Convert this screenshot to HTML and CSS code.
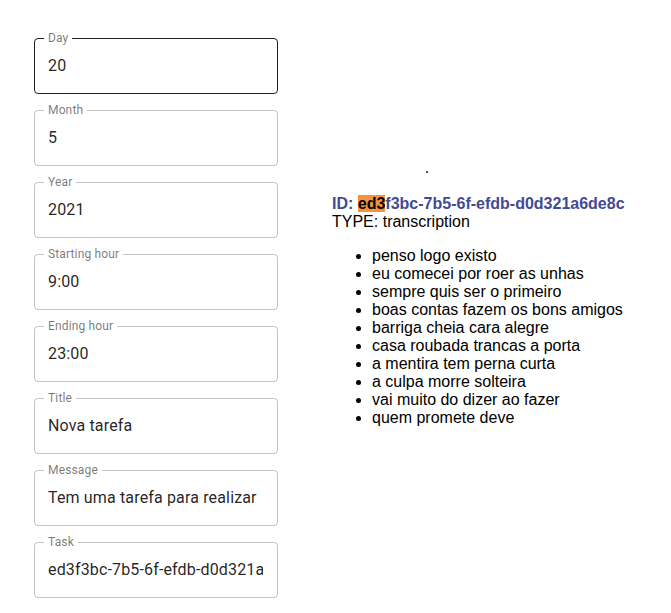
FILE: index.html
```html
<!DOCTYPE html>
<html lang="pt">
<head>
    <meta charset="UTF-8">
    <meta name="viewport" content="width=device-width, initial-scale=1.0">
    <title>Tarefa</title>
    <link rel="stylesheet" href="styles.css">
</head>
<body>
    <div class="page">
        <form class="task-form">
            <fieldset class="field active">
                <legend>Day</legend>
                <input type="text" value="20">
            </fieldset>
            <fieldset class="field">
                <legend>Month</legend>
                <input type="text" value="5">
            </fieldset>
            <fieldset class="field">
                <legend>Year</legend>
                <input type="text" value="2021">
            </fieldset>
            <fieldset class="field">
                <legend>Starting hour</legend>
                <input type="text" value="9:00">
            </fieldset>
            <fieldset class="field">
                <legend>Ending hour</legend>
                <input type="text" value="23:00">
            </fieldset>
            <fieldset class="field">
                <legend>Title</legend>
                <input type="text" value="Nova tarefa">
            </fieldset>
            <fieldset class="field">
                <legend>Message</legend>
                <input type="text" value="Tem uma tarefa para realizar">
            </fieldset>
            <fieldset class="field">
                <legend>Task</legend>
                <input type="text" value="ed3f3bc-7b5-6f-efdb-d0d321a6de8c">
            </fieldset>
        </form>

        <div class="details">
            <p class="dot">.</p>
            <p class="task-id">ID: <mark>ed3</mark>f3bc-7b5-6f-efdb-d0d321a6de8c</p>
            <p>TYPE: transcription</p>
            <ul class="phrases">
                <li>penso logo existo</li>
                <li>eu comecei por roer as unhas</li>
                <li>sempre quis ser o primeiro</li>
                <li>boas contas fazem os bons amigos</li>
                <li>barriga cheia cara alegre</li>
                <li>casa roubada trancas a porta</li>
                <li>a mentira tem perna curta</li>
                <li>a culpa morre solteira</li>
                <li>vai muito do dizer ao fazer</li>
                <li>quem promete deve</li>
            </ul>
        </div>
    </div>
</body>
</html>
```

FILE: styles.css
```css
* {
    box-sizing: border-box;
    margin: 0;
    padding: 0;
}

body {
    background-color: #fff;
    color: #000;
}

.page {
    display: flex;
    align-items: flex-start;
    gap: 54px;
    padding: 32px 34px;
}

.task-form {
    display: flex;
    flex-direction: column;
    gap: 10px;
    width: 244px;
    flex-shrink: 0;
    font-family: Roboto, "Liberation Sans", sans-serif;
    letter-spacing: 0.00938em;
}

.field {
    border: 1px solid rgba(0, 0, 0, 0.23);
    border-radius: 4px;
    padding: 0 9px;
    height: 62px;
}

.field.active {
    border-color: rgba(0, 0, 0, 0.87);
}

.field legend {
    padding: 0 4px;
    font-size: 12px;
    line-height: 12px;
    color: rgba(0, 0, 0, 0.54);
}

.field input {
    display: block;
    width: 100%;
    border: none;
    outline: none;
    background: transparent;
    padding: 12px 5px 0 4px;
    font-family: inherit;
    font-size: 16px;
    line-height: 19px;
    letter-spacing: inherit;
    color: rgba(0, 0, 0, 0.87);
}

.details {
    margin-top: 127px;
    font-family: "Liberation Sans", Arial, sans-serif;
    font-size: 16px;
    line-height: 18px;
}

.dot {
    width: 190px;
    text-align: center;
    margin-bottom: 18px;
}

.task-id {
    font-weight: bold;
    color: #3f4b94;
}

.task-id mark {
    background-color: #f7923a;
    color: #000;
}

.phrases {
    margin-top: 16px;
    padding-left: 40px;
}
```
